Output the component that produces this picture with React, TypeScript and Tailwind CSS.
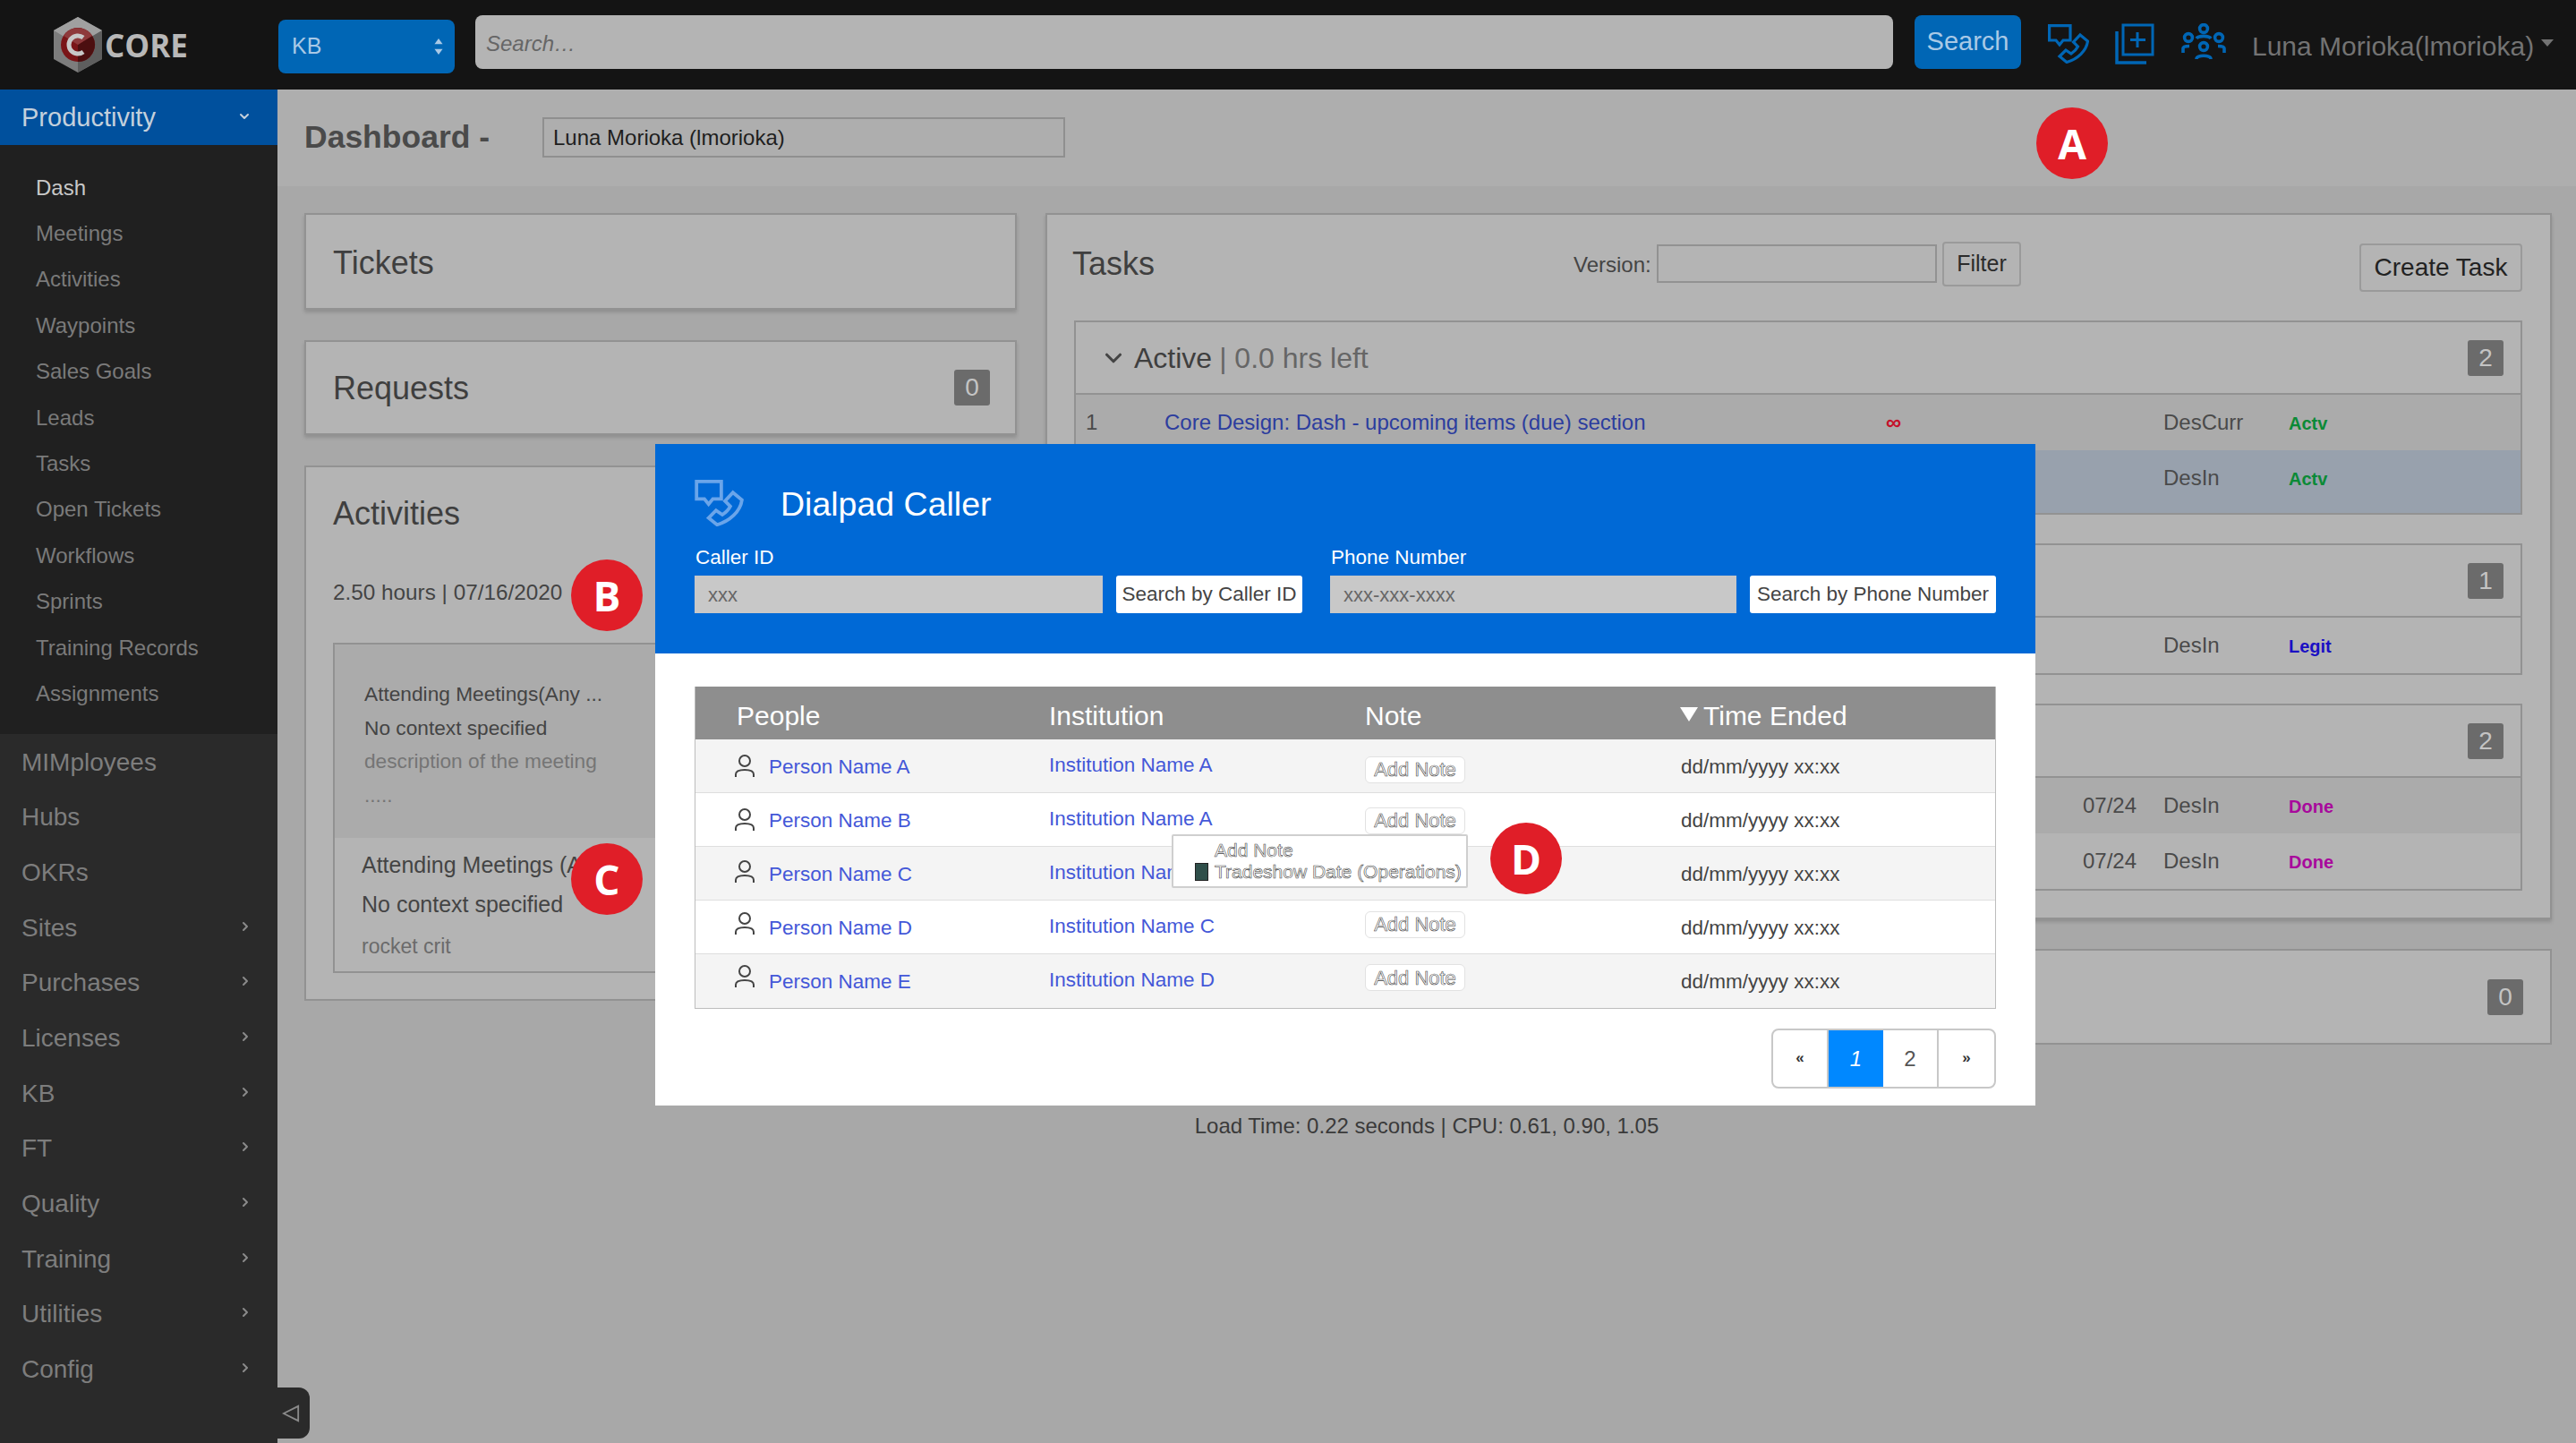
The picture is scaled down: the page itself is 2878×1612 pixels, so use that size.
import React from "react";
import { ChevronRight, ChevronDown } from "lucide-react";

const sub = ["Dash","Meetings","Activities","Waypoints","Sales Goals","Leads","Tasks","Open Tickets","Workflows","Sprints","Training Records","Assignments"];
const mains: [string, boolean][] = [["MIMployees",false],["Hubs",false],["OKRs",false],["Sites",true],["Purchases",true],["Licenses",true],["KB",true],["FT",true],["Quality",true],["Training",true],["Utilities",true],["Config",true]];
const people = [
  ["Person Name A","Institution Name A","-translate-y-[1px]","translate-y-[3px]"],
  ["Person Name B","Institution Name A","-translate-y-[1px]","translate-y-[0px]"],
  ["Person Name C","Institution Name B","-translate-y-[3px]","translate-y-[0px]"],
  ["Person Name D","Institution Name C","-translate-y-[5px]","-translate-y-[4px]"],
  ["Person Name E","Institution Name D","-translate-y-[6px]","-translate-y-[5px]"],
];

function DialIcon({ className }: { className: string }) {
  return (
    <svg viewBox="0 0 46 44" fill="none" stroke="currentColor" strokeWidth="3.2" className={className}>
      <path d="M1.6 1.6H25V18H17L13 23L9 18H1.6Z" />
      <path d="M36 12L44.5 19C43 30 33 39 21 42.5L13 36L20 29L26 33C29 31 32 28 33.5 25L28.5 20Z" />
    </svg>
  );
}
function CopyPlus({ className }: { className: string }) {
  return (
    <svg viewBox="0 0 44 46" fill="none" stroke="currentColor" strokeWidth="3" className={className}>
      <rect x="9" y="2" width="33" height="33" />
      <path d="M25 10V27M17 18.5H34" />
      <path d="M2 9V44H35" strokeWidth="3.5" />
    </svg>
  );
}
function GroupIcon({ className }: { className: string }) {
  return (
    <svg viewBox="0 0 50 42" fill="none" stroke="currentColor" strokeWidth="3.6" className={className}>
      <circle cx="25" cy="6" r="4.4" />
      <circle cx="8" cy="16" r="4.4" />
      <circle cx="42" cy="16" r="4.4" />
      <circle cx="25" cy="26" r="4.4" />
      <path d="M17 17C19 13.5 31 13.5 33 17" />
      <path d="M2 33V28C2 26.5 4 25.5 9 25.5M48 33V28C48 26.5 46 25.5 41 25.5" />
      <path d="M17 40C17 35 33 35 33 40" />
    </svg>
  );
}
function PersonIcon({ className }: { className: string }) {
  return (
    <svg viewBox="0 0 24 26" fill="none" stroke="#444" strokeWidth="2" className={"w-[24px] h-[26px] shrink-0 " + className}>
      <circle cx="12" cy="7" r="6" />
      <path d="M2 25V22C2 18 6 17 12 17C18 17 22 18 22 22V25" />
    </svg>
  );
}
function Marker({ ch, className }: { ch: string; className: string }) {
  return (
    <div className={"absolute w-[80px] h-[80px] rounded-full bg-[#e01e28] text-white flex items-center justify-center font-['Open_Sans',sans-serif] font-bold text-[46px] leading-none " + className}>
      {ch}
    </div>
  );
}
function Badge({ n }: { n: string }) {
  return <span className="w-[40px] h-[40px] rounded-[3px] bg-[#6b6b6b] text-[#c4c4c4] text-[28px] flex items-center justify-center">{n}</span>;
}
function Row({ n, link, inf, date, who, status, color, bg }: { n?: string; link?: string; inf?: boolean; date?: string; who: string; status: string; color: string; bg: string }) {
  return (
    <div className={"flex items-center text-[24px] text-[#4a4a4a] " + bg}>
      <span className="w-[99px] pl-[11px]">{n}</span>
      <span className="w-[806px] text-[#2c3d9e] whitespace-nowrap">{link}</span>
      <span className="w-[220px] text-[#c4112a] font-bold leading-none">{inf ? "∞" : ""}</span>
      <span className="w-[90px]">{date}</span>
      <span className="w-[140px]">{who}</span>
      <span className={"text-[20px] font-bold mt-[2px] " + color}>{status}</span>
    </div>
  );
}
function NoteBtn({ className }: { className: string }) {
  return (
    <span className={"w-[112px] h-[30px] rounded-[6px] border border-[#e2e2e2] bg-white flex items-center justify-center text-[22px] text-transparent [-webkit-text-stroke:0.6px_#444] " + className}>Add Note</span>
  );
}

export default function App() {
  return (
    <div className="relative w-[2878px] h-[1612px] overflow-hidden flex flex-col font-['Liberation_Sans',sans-serif] bg-[#a8a8a8]">
      <header className="h-[100px] shrink-0 bg-[#141414] flex items-center">
        <div className="w-[311px] shrink-0 flex items-center pl-[60px] gap-[3px]">
          <svg viewBox="0 0 54 62" className="w-[54px] h-[62px]">
            <path d="M27 0L54 15V47L27 62L0 47V15Z" fill="#7d7d7d" />
            <path d="M27 0L54 15L27 31L0 15Z" fill="#a0a0a0" />
            <path d="M54 15V47L27 62V31Z" fill="#5e5e5e" />
            <circle cx="27" cy="31" r="19" fill="#7a1518" />
            <path d="M27 31L43 21A19 19 0 0 1 27 50Z" fill="#4c0f10" />
            <path d="M27 31L11 21A19 19 0 0 1 43 21Z" fill="#8e3a3c" />
            <path d="M33 23A10 10 0 1 0 33 39" fill="none" stroke="#c8c8c8" strokeWidth="5" />
          </svg>
          <span className="font-['Open_Sans',sans-serif] font-bold text-[35px] leading-none text-[#b8b8b8]">CORE</span>
        </div>
        <div className="w-[197px] h-[60px] mt-[4px] rounded-[8px] bg-[#0066b5] flex items-center justify-between pl-[15px] pr-[12px] text-[25px] text-[#a9c9e6]">
          KB
          <svg viewBox="0 0 12 22" className="w-[12px] h-[20px]" fill="#a9c9e6"><path d="M6 1L11 8H1Z" /><path d="M6 21L1 14H11Z" /></svg>
        </div>
        <div className="ml-[23px] w-[1584px] h-[60px] -mt-[6px] rounded-[8px] bg-[#b4b4b4] flex items-center pl-[12px] pt-[3px] text-[24px] italic text-[#666]">Search…</div>
        <div className="ml-[24px] w-[119px] h-[60px] -mt-[6px] rounded-[8px] bg-[#0066b5] flex items-center justify-center text-[29px] text-[#a9c9e6]">Search</div>
        <div className="ml-[30px] -mt-[2px] text-[#0066b5] flex items-center">
          <DialIcon className="w-[46px] h-[44px]" />
          <CopyPlus className="w-[44px] h-[46px] ml-[29px]" />
          <GroupIcon className="w-[50px] h-[42px] ml-[30px] -mt-[4px]" />
        </div>
        <div className="ml-[29px] mt-[2px] text-[30px] text-[#737373] whitespace-nowrap flex items-center">
          Luna Morioka(lmorioka)
          <span className="ml-[8px] mb-[6px] w-0 h-0 border-x-[7px] border-x-transparent border-t-[8px] border-t-[#737373]" />
        </div>
      </header>

      <div className="flex flex-1 min-h-0">
        <aside className="w-[310px] shrink-0 bg-[#2a2a2a] flex flex-col">
          <div className="h-[62px] bg-[#00509d] flex items-center justify-between pl-[24px] pr-[29px] pt-[2px] text-[29px] text-[#c4d0dc]">
            Productivity
            <ChevronDown size={16} strokeWidth={3} className="text-[#c4d0dc] -mt-[4px]" />
          </div>
          <div className="bg-[#202020] pt-[22px] pb-[19px]">
            {sub.map((s, i) => (
              <div key={s} className={"h-[51.4px] flex items-center pl-[40px] text-[24px] " + (i === 0 ? "text-[#c8c8c8]" : "text-[#7a7a7a]")}>{s}</div>
            ))}
          </div>
          <div className="pt-[1px]">
            {mains.map(([m, c]) => (
              <div key={m} className="h-[61.7px] flex items-center justify-between pl-[24px] pr-[28px] text-[28px] text-[#7d7d7d]">
                {m}
                {c && <ChevronRight size={16} strokeWidth={3} className="text-[#8a8a8a] -mt-[4px]" />}
              </div>
            ))}
          </div>
        </aside>

        <main className="flex-1 min-w-0 flex flex-col">
          <div className="h-[108px] shrink-0 bg-[#aeaeae] flex items-center pl-[30px]">
            <span className="w-[266px] text-[35.5px] font-bold text-[#4a4a4a] whitespace-nowrap">Dashboard -</span>
            <div className="w-[584px] h-[45px] -mt-[1px] border-2 border-[#8f8f8f] flex items-center pl-[10px] text-[24px] text-[#1e1e1e]">Luna Morioka (lmorioka)</div>
          </div>
          <div className="pt-[30px] pl-[30px] grid grid-cols-[796px_1683px] gap-x-[32px] items-start">
            <div className="flex flex-col gap-[34px]">
              <section className="h-[108px] bg-[#b4b4b4] border-2 border-[#929292] shadow-[0_3px_4px_rgba(0,0,0,0.15)] flex items-center pl-[30px] pt-[3px] text-[36px] text-[#3f3f3f]">Tickets</section>
              <section className="h-[106px] bg-[#b4b4b4] border-2 border-[#929292] shadow-[0_3px_4px_rgba(0,0,0,0.15)] flex items-center justify-between pl-[30px] pr-[28px] text-[36px] text-[#3f3f3f]">
                <span className="mt-[2px]">Requests</span>
                <Badge n="0" />
              </section>
              <section className="h-[598px] bg-[#b4b4b4] border-2 border-[#929292] pl-[30px] pr-[30px] flex flex-col">
                <h2 className="text-[36px] text-[#3f3f3f] mt-[30px] leading-[44px]">Activities</h2>
                <div className="text-[24.3px] text-[#444] mt-[51px] leading-[30px]">2.50 hours | 07/16/2020</div>
                <div className="mt-[41px] h-[369px] border-2 border-[#929292] flex flex-col">
                  <div className="h-[216px] bg-[#ababab] pl-[33px] pt-[37px] text-[22.7px] leading-[37.5px] text-[#444]">
                    <div>Attending Meetings(Any ...</div>
                    <div>No context specified</div>
                    <div className="text-[#757575]">description of the meeting</div>
                    <div className="text-[#757575]">.....</div>
                  </div>
                  <div className="pl-[30px] pt-[9px] text-[#444]">
                    <div className="text-[25px] leading-[43px]">Attending Meetings (Any</div>
                    <div className="text-[25px] leading-[44px]">No context specified</div>
                    <div className="text-[23px] leading-[50px] text-[#6b6b6b]">rocket crit</div>
                  </div>
                </div>
              </section>
            </div>

            <div className="flex flex-col gap-[33px]">
              <section className="h-[789px] bg-[#b4b4b4] border-2 border-[#929292] shadow-[0_3px_4px_rgba(0,0,0,0.15)] pl-[28px] pr-[31px] flex flex-col">
                <div className="h-[118px] flex items-center pr-0">
                  <h2 className="text-[36px] text-[#3f3f3f] w-[560px] -mt-[9px]">Tasks</h2>
                  <span className="text-[24px] text-[#444] w-[93px] -mt-[7px] whitespace-nowrap">Version:</span>
                  <div className="w-[313px] h-[43px] -mt-[9px] border-2 border-[#929292]" />
                  <div className="ml-[6px] w-[88px] h-[50px] -mt-[8px] rounded-[4px] border-2 border-[#9a9a9a] flex items-center justify-center text-[25px] text-[#2b2b2b]">Filter</div>
                  <div className="ml-auto w-[182px] h-[54px] -mt-[1px] rounded-[4px] border-2 border-[#9a9a9a] flex items-center justify-center text-[28px] text-[#222]">Create Task</div>
                </div>
                <div className="border-2 border-[#929292] ml-[2px] h-[217px] flex flex-col">
                  <div className="h-[81px] border-b-2 border-[#929292] flex items-center justify-between pl-[27px] pr-[19px]">
                    <span className="flex items-center text-[32px] text-[#3f3f3f]">
                      <ChevronDown size={30} strokeWidth={2.5} className="mr-[8px] text-[#444]" />
                      Active<span className="text-[#666] ml-[8px]">| 0.0 hrs left</span>
                    </span>
                    <Badge n="2" />
                  </div>
                  <Row n="1" link="Core Design: Dash - upcoming items (due) section" inf who="DesCurr" status="Actv" color="text-[#0b8a36]" bg="h-[62px] bg-[#ababab]" />
                  <Row who="DesIn" status="Actv" color="text-[#0b8a36]" bg="flex-1 pb-[8px] bg-[#98a1ad]" />
                </div>
                <div className="border-2 border-[#929292] ml-[2px] h-[147px] mt-[32px] flex flex-col">
                  <div className="h-[81px] border-b-2 border-[#929292] flex items-center justify-end pr-[19px]"><Badge n="1" /></div>
                  <Row who="DesIn" status="Legit" color="text-[#1a10c4]" bg="flex-1" />
                </div>
                <div className="border-2 border-[#929292] ml-[2px] h-[209px] mt-[32px] flex flex-col">
                  <div className="h-[81px] border-b-2 border-[#929292] flex items-center justify-end pr-[19px]"><Badge n="2" /></div>
                  <Row date="07/24" who="DesIn" status="Done" color="text-[#a8099c]" bg="h-[62px] bg-[#ababab]" />
                  <Row date="07/24" who="DesIn" status="Done" color="text-[#a8099c]" bg="flex-1" />
                </div>
              </section>
              <section className="h-[107px] bg-[#b4b4b4] border-2 border-[#929292] flex items-center justify-end pr-[30px]"><Badge n="0" /></section>
            </div>
          </div>
          <div className="mt-[76px] text-center text-[24px] leading-[30px] text-[#3a3a3a]">Load Time: 0.22 seconds | CPU: 0.61, 0.90, 1.05</div>
        </main>
      </div>

      <button className="absolute left-[310px] top-[1550px] w-[36px] h-[57px] rounded-r-[12px] bg-[#2a2a2a] flex items-center justify-start pl-[5px]">
        <svg viewBox="0 0 22 22" className="w-[20px] h-[20px]" fill="none" stroke="#8a8a8a" strokeWidth="2"><path d="M20 2V20L2 11Z" /></svg>
      </button>

      <div className="absolute left-[732px] top-[496px] w-[1542px] h-[739px] bg-white flex flex-col">
        <div className="h-[234px] shrink-0 bg-[#0069d6] px-[44px] pt-[39px] flex flex-col">
          <div className="flex items-center h-[54px]">
            <DialIcon className="w-[55px] h-[52px] text-[#6aa5ea]" />
            <span className="ml-[41px] mt-[2px] text-[37.5px] text-white">Dialpad Caller</span>
          </div>
          <div className="flex mt-[19px]">
            <div className="w-[710px]">
              <div className="text-[22.5px] leading-[30px] text-white pl-[1px]">Caller ID</div>
              <div className="flex mt-[5px]">
                <div className="w-[456px] h-[42px] bg-[#c8c8c8] flex items-center pl-[15px] text-[22px] text-[#666]">xxx</div>
                <div className="ml-[15px] w-[208px] h-[42px] rounded-[3px] bg-white flex items-center justify-center text-[22.5px] text-[#444] whitespace-nowrap">Search by Caller ID</div>
              </div>
            </div>
            <div>
              <div className="text-[22.5px] leading-[30px] text-white pl-[1px]">Phone Number</div>
              <div className="flex mt-[5px]">
                <div className="w-[454px] h-[42px] bg-[#c8c8c8] flex items-center pl-[15px] text-[22px] text-[#666]">xxx-xxx-xxxx</div>
                <div className="ml-[15px] w-[275px] h-[42px] rounded-[3px] bg-white flex items-center justify-center text-[22.5px] text-[#444] whitespace-nowrap">Search by Phone Number</div>
              </div>
            </div>
          </div>
        </div>
        <div className="px-[44px] pt-[37px]">
          <div className="border border-[#bdbdbd] border-t-0">
            <div className="h-[59px] bg-[#8e8e8e] flex items-center pt-[5px] text-[30px] text-white">
              <span className="w-[395px] pl-[46px]">People</span>
              <span className="w-[353px]">Institution</span>
              <span className="w-[352px]">Note</span>
              <span className="flex items-center">
                <span className="w-0 h-0 border-x-[10px] border-x-transparent border-t-[16px] border-t-white mr-[6px] -mt-[2px]" />
                Time Ended
              </span>
            </div>
            {people.map(([p, inst, iconY, noteY], i) => (
              <div key={p} className={"h-[60px] flex items-center pt-[2px] text-[22.5px] border-b border-[#dedede] last:border-b-0 " + (i % 2 === 0 ? "bg-[#f4f4f4]" : "bg-white")}>
                <span className="w-[395px] pl-[43px] flex items-center gap-[15px] text-[#4458d8]">
                  <PersonIcon className={iconY} />
                  {p}
                </span>
                <span className="w-[353px] text-[#4458d8] -mt-[4px] whitespace-nowrap">{inst}</span>
                <span className="w-[353px]"><NoteBtn className={noteY} /></span>
                <span className="text-[#444]">dd/mm/yyyy xx:xx</span>
              </div>
            ))}
          </div>
          <div className="flex justify-end mt-[22px]">
            <div className="w-[251px] h-[67px] rounded-[8px] border-2 border-[#c8c8c8] flex items-center text-[#555] text-[24px] overflow-hidden">
              <span className="w-[62px] h-full flex items-center justify-center border-r-2 border-[#c8c8c8] text-[17px] font-bold text-[#333] -mt-[1px]">«</span>
              <span className="w-[61px] h-full bg-[#0088ff] text-white italic flex items-center justify-center">1</span>
              <span className="w-[62px] h-full flex items-center justify-center border-r-2 border-[#c8c8c8]">2</span>
              <span className="flex-1 flex items-center justify-center text-[17px] font-bold text-[#333] -mt-[1px]">»</span>
            </div>
          </div>
        </div>
      </div>

      <div className="absolute left-[1309px] top-[932px] w-[331px] h-[60px] bg-white border-2 border-[#cfcfcf] rounded-[2px] text-[21px] leading-[24px] text-transparent [-webkit-text-stroke:0.6px_#444] pl-[46px] pt-[4px]">
        <div>Add Note</div>
        <div className="flex items-center whitespace-nowrap relative">
          <span className="absolute -left-[22px] top-[2px] w-[15px] h-[20px] bg-[#2f4f4a] border border-[#222]" />
          Tradeshow Date (Operations)
        </div>
      </div>

      <Marker ch="A" className="left-[2275px] top-[120px]" />
      <Marker ch="B" className="left-[638px] top-[625px]" />
      <Marker ch="C" className="left-[638px] top-[942px]" />
      <Marker ch="D" className="left-[1665px] top-[919px]" />
    </div>
  );
}
